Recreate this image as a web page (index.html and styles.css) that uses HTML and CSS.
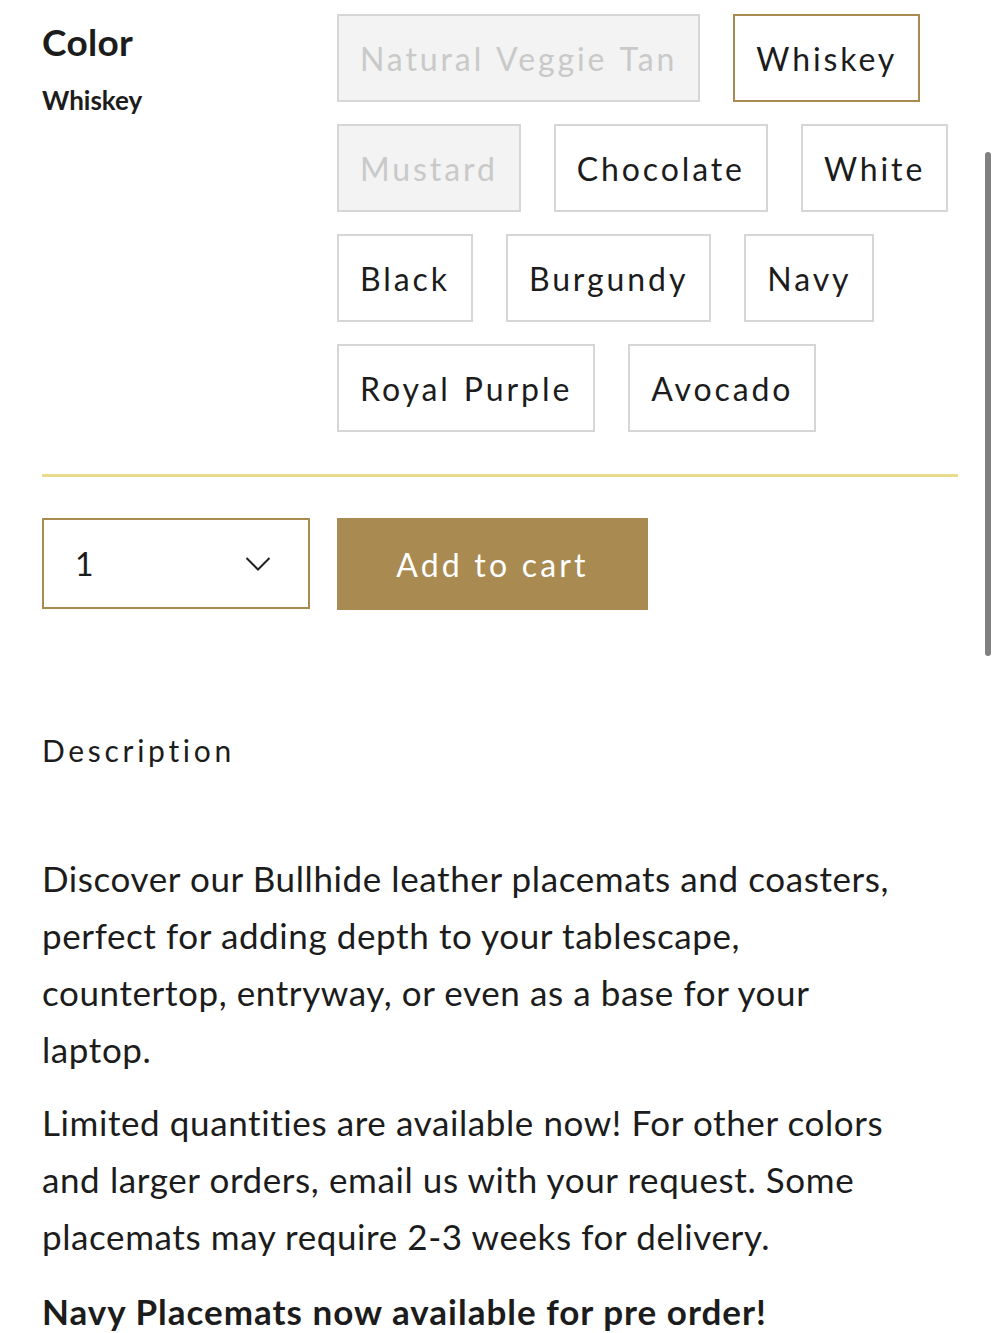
FILE: index.html
```html
<!DOCTYPE html>
<html lang="en">
<head>
<meta charset="utf-8">
<title>Color options</title>
<link rel="stylesheet" href="styles.css">
</head>
<body>
<div class="page">
  <section class="option-row">
    <div class="option-label">
      <h2 class="option-title">Color</h2>
      <p class="option-value">Whiskey</p>
    </div>
    <div class="swatches">
      <span class="swatch is-disabled">Natural Veggie Tan</span>
      <span class="swatch is-selected">Whiskey</span>
      <span class="swatch is-disabled">Mustard</span>
      <span class="swatch">Chocolate</span>
      <span class="swatch">White</span>
      <span class="swatch">Black</span>
      <span class="swatch">Burgundy</span>
      <span class="swatch">Navy</span>
      <span class="swatch">Royal Purple</span>
      <span class="swatch">Avocado</span>
    </div>
  </section>

  <div class="divider"></div>

  <section class="buy-row">
    <div class="qty">
      <span class="qty-value">1</span>
      <svg class="qty-chevron" width="26" height="16" viewBox="0 0 26 16" aria-hidden="true">
        <path d="M1.5 2 L13 13.5 L24.5 2" fill="none" stroke="#222" stroke-width="2"/>
      </svg>
    </div>
    <button class="add-to-cart">Add to cart</button>
  </section>

  <h3 class="desc-title">Description</h3>

  <div class="desc">
    <p>Discover our Bullhide leather placemats and coasters, perfect for adding depth to your tablescape, countertop, entryway, or even as a base for your laptop.</p>
    <p>Limited quantities are available now! For other colors and larger orders, email us with your request. Some placemats may require 2-3 weeks for delivery.</p>
    <p class="desc-strong">Navy Placemats now available for pre order!</p>
  </div>
</div>
<div class="scroll-indicator"></div>
</body>
</html>
```

FILE: styles.css
```css
html, body {
  margin: 0;
  padding: 0;
  background: #ffffff;
}

body {
  font-family: "Lato", "Open Sans", sans-serif;
  color: #1c1c1c;
  overflow: hidden;
}

.page {
  padding: 14px 42px 0 42px;
}

.option-row {
  display: flex;
  align-items: flex-start;
}

.option-label {
  width: 295px;
  flex: none;
  padding-top: 8px;
}

.option-title {
  margin: 0;
  font-size: 37px;
  font-weight: 700;
  line-height: 40px;
  letter-spacing: 0.3px;
}

.option-value {
  margin: 23px 0 0 0;
  font-size: 26px;
  font-weight: 700;
  line-height: 30px;
}

.swatches {
  flex: 1;
  display: flex;
  flex-wrap: wrap;
  gap: 22px 33px;
}

.swatch {
  box-sizing: border-box;
  height: 88px;
  display: flex;
  align-items: center;
  padding: 0 21px;
  border: 2px solid #d6d6d6;
  font-size: 32px;
  letter-spacing: 2.9px;
  word-spacing: 2px;
  color: #1c1c1c;
  background: #ffffff;
  white-space: nowrap;
}

.swatch.is-disabled {
  background: #f3f3f3;
  color: #c9c9c9;
}

.swatch.is-selected {
  border-color: #a98a4f;
}

.divider {
  height: 3px;
  background: #eadb8a;
  margin-top: 42px;
}

.buy-row {
  display: flex;
  gap: 27px;
  margin-top: 41px;
}

.qty {
  box-sizing: border-box;
  width: 268px;
  height: 91px;
  border: 2px solid #a98a4f;
  display: flex;
  align-items: center;
  justify-content: space-between;
  padding: 0 37px 0 31px;
}

.qty-value {
  font-size: 32px;
  color: #1c1c1c;
}

.qty-chevron {
  display: block;
}

.add-to-cart {
  width: 311px;
  height: 92px;
  border: none;
  background: #a98b51;
  color: #ffffff;
  font-family: inherit;
  font-size: 32px;
  letter-spacing: 3.2px;
  padding: 0;
  cursor: pointer;
}

.desc-title {
  margin: 120px 0 0 0;
  font-size: 30px;
  font-weight: 400;
  line-height: 40px;
  letter-spacing: 3.7px;
}

.desc {
  margin-top: 80px;
  font-size: 35px;
  line-height: 57px;
  letter-spacing: 0.6px;
}

.desc p {
  margin: 0 0 18px 0;
  max-width: 866px;
}

.desc p:first-child {
  margin-bottom: 16px;
}

.desc .desc-strong {
  font-weight: 700;
  letter-spacing: 1px;
}

.scroll-indicator {
  position: absolute;
  top: 152px;
  left: 985px;
  width: 6px;
  height: 504px;
  border-radius: 3px;
  background: #808080;
}
```
